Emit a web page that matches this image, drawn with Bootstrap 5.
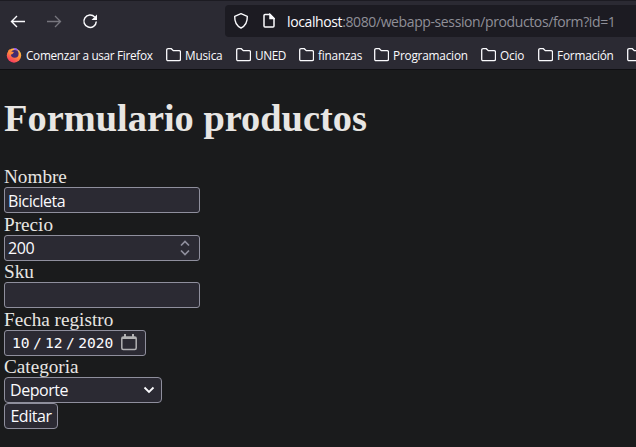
<!DOCTYPE html>
<html lang="es">
<head>
<meta charset="utf-8">
<title>Formulario productos</title>
<link href="https://cdn.jsdelivr.net/npm/bootstrap@5.3.0/dist/css/bootstrap.min.css" rel="stylesheet">
<style>
html,body{height:447px;overflow:hidden}
body{background:#1a1b1c;color:#e8e6e3;font-family:"Liberation Serif",serif;font-size:19.2px;line-height:22px}
svg{display:block;flex:none;fill:none;stroke:currentColor}
.browser-top{height:70px;background:#2b2a33;border-top:1px solid #1c1b22;border-bottom:1px solid #0f0f12;color:#fbfbfe;font-family:"Open Sans","Noto Sans",sans-serif}
.tool-row{height:41px;padding:4px 0 5px 10px}
.nav-icons{width:215px;gap:20px}
.dim{color:#77767e}
.address{height:32px;background:#1c1b22;border-radius:4px 0 0 4px;padding-left:8px;font-size:14px;white-space:pre}
.page-icon{margin-left:14px}
.address-text{margin:2px 0 0 12px;color:#8f8f98;letter-spacing:-.39px}
.address-text b{font-weight:400;color:#fbfbfe}
.marks{height:26px;padding-left:6px;font-size:11.8px;line-height:26px;white-space:nowrap}
.mark-item{gap:4px;flex:none;letter-spacing:-.2px}
.m1{width:160px;letter-spacing:-.32px}.m2{width:70px}.m3{width:63px;letter-spacing:-.4px}.m4{width:75px}.m5{width:107px}.m6{width:57px}.m7{width:89px}
.page{padding:0 4px}
.page h1{font-size:38.4px;line-height:44px;font-weight:700;margin:26px 0 26px;letter-spacing:0}
.page label{display:block;height:21px;line-height:22px}
.field{width:196px;height:26px;margin-bottom:.5px;border:1px solid #8f8f9d;border-radius:3px;background:#2b2a33;color:#fbfbfe;font:16px/26px "Open Sans","Noto Sans",sans-serif;letter-spacing:-.45px;padding:0 3px}
.spin{color:#8f8f9d;margin-right:4px}
.date-field{width:142px;font:14.6px/24px "DejaVu Sans Mono","Liberation Mono",monospace;letter-spacing:0;padding:0 8px 0 7px}
.date-field i{font-style:normal;display:inline-block;width:15.500px;text-align:center}
.cal{color:#b1b1b3}
.select-field{width:158px;border-radius:4px;padding:0 6px 0 5px;margin:0}
.send{width:54px;border-radius:4px;padding:0 5px;display:block;line-height:24px;margin-top:-.5px}
</style>
<script src="https://cdn.jsdelivr.net/npm/bootstrap@5.3.0/dist/js/bootstrap.bundle.min.js"></script>
</head>
<body>
<svg width="0" height="0" class="position-absolute"><defs><g id="folder"><path d="M.7 11.3V2.2Q.7.7 2.2.7h3.1l2 2h5.8q1.4 0 1.4 1.4v7.2q0 1.4-1.4 1.4h-11Q.7 12.7.7 11.3Z" stroke-width="1.3"/></g></defs></svg>
<header class="browser-top">
<div class="tool-row d-flex">
<div class="nav-icons d-flex align-items-center">
<svg width="16" height="16" viewBox="0 0 16 16" stroke-width="1.4"><path d="M15 8.5H1.5M7 3 1.5 8.5 7 14"/></svg>
<svg class="dim" width="16" height="16" viewBox="0 0 16 16" stroke-width="1.3"><path d="M1 8.5h13.5M9 3l5.500 5.500L9 14"/></svg>
<svg width="16" height="16" viewBox="0 0 16 16" stroke-width="1.5"><path d="M12.700 4A6.200 6.200 0 1 0 14.300 8.500"/><path d="M15 1.500V7H9.500Z" fill="currentColor" stroke="none"/></svg>
</div>
<div class="address flex-fill d-flex align-items-center">
<svg width="16" height="18" viewBox="0 0 16 18" stroke-width="1.400"><path d="M8 1.700 14.300 4.300C14.500 10 12.300 14 8 16 3.700 14 1.500 10 1.700 4.300Z" stroke-linejoin="round"/></svg>
<svg class="page-icon" width="12" height="16" viewBox="0 0 12 16" stroke-width="1.500"><path d="M1 2.500Q1 1.500 2 1.500H7L11 5.500V13Q11 14 10 14H2Q1 14 1 13Z"/><path d="M7 1.500V5.500H11Z" fill="currentColor"/></svg>
<span class="address-text"><b>localhost</b>:8080/webapp-session/productos/form?id=1</span>
</div>
</div>
<nav class="marks d-flex">
<div class="mark-item m1 d-flex align-items-center"><svg width="16" height="16" viewBox="0 0 16 16"><defs><linearGradient id="flame" x1=".8" y1="0" x2=".2" y2="1"><stop offset="0" stop-color="#ffd94a"/><stop offset=".45" stop-color="#ff8b3c"/><stop offset="1" stop-color="#f52b67"/></linearGradient></defs><g stroke="none"><circle cx="8" cy="8.500" r="7.200" fill="url(#flame)"/><path d="M7 1.500Q10 0 12 3L14.500 7Q13 3 9 3Z" fill="#9059ff"/><circle cx="8.700" cy="6.800" r="3.900" fill="#432c70"/><path d="M2 4 4 2 5 4.500 8 5 6.500 7 4 8Z" fill="#ff8b3c"/></g></svg><span>Comenzar a usar Firefox</span></div>
<div class="mark-item m2 d-flex align-items-center"><svg width="15" height="14"><use href="#folder"/></svg><span>Musica</span></div>
<div class="mark-item m3 d-flex align-items-center"><svg width="15" height="14"><use href="#folder"/></svg><span>UNED</span></div>
<div class="mark-item m4 d-flex align-items-center"><svg width="15" height="14"><use href="#folder"/></svg><span>finanzas</span></div>
<div class="mark-item m5 d-flex align-items-center"><svg width="15" height="14"><use href="#folder"/></svg><span>Programacion</span></div>
<div class="mark-item m6 d-flex align-items-center"><svg width="15" height="14"><use href="#folder"/></svg><span>Ocio</span></div>
<div class="mark-item m7 d-flex align-items-center"><svg width="15" height="14"><use href="#folder"/></svg><span>Formación</span></div>
<div class="mark-item d-flex align-items-center"><svg width="15" height="14"><use href="#folder"/></svg></div>
</nav>
</header>
<main class="page">
<h1>Formulario productos</h1>
<label>Nombre</label>
<div class="field">Bicicleta</div>
<label>Precio</label>
<div class="field d-flex align-items-center justify-content-between"><span>200</span><svg class="spin" width="14" height="18" viewBox="0 0 14 18" stroke-width="1.700"><path d="m3 6.500 4-4 4 4M3 11.500l4 4 4-4"/></svg></div>
<label>Sku</label>
<div class="field"></div>
<label>Fecha registro</label>
<div class="field date-field d-flex align-items-center justify-content-between"><span>10<i>/</i>12<i>/</i>2020</span><svg class="cal" width="16" height="17" viewBox="0 0 16 17" stroke-width="1.500"><rect x=".8" y="3" width="14.400" height="12.500" rx="1.500"/><path d="M1 4h14M4 0v4M12 0v4" stroke-width="2"/></svg></div>
<label>Categoria</label>
<div class="field select-field d-flex align-items-center justify-content-between"><span>Deporte</span><svg width="12" height="10" viewBox="0 0 12 10" stroke-width="1.800"><path d="m1.500 2.500 4.500 4.500 4.500-4.500"/></svg></div>
<button class="field send" type="button">Editar</button>
</main>
</body>
</html>
